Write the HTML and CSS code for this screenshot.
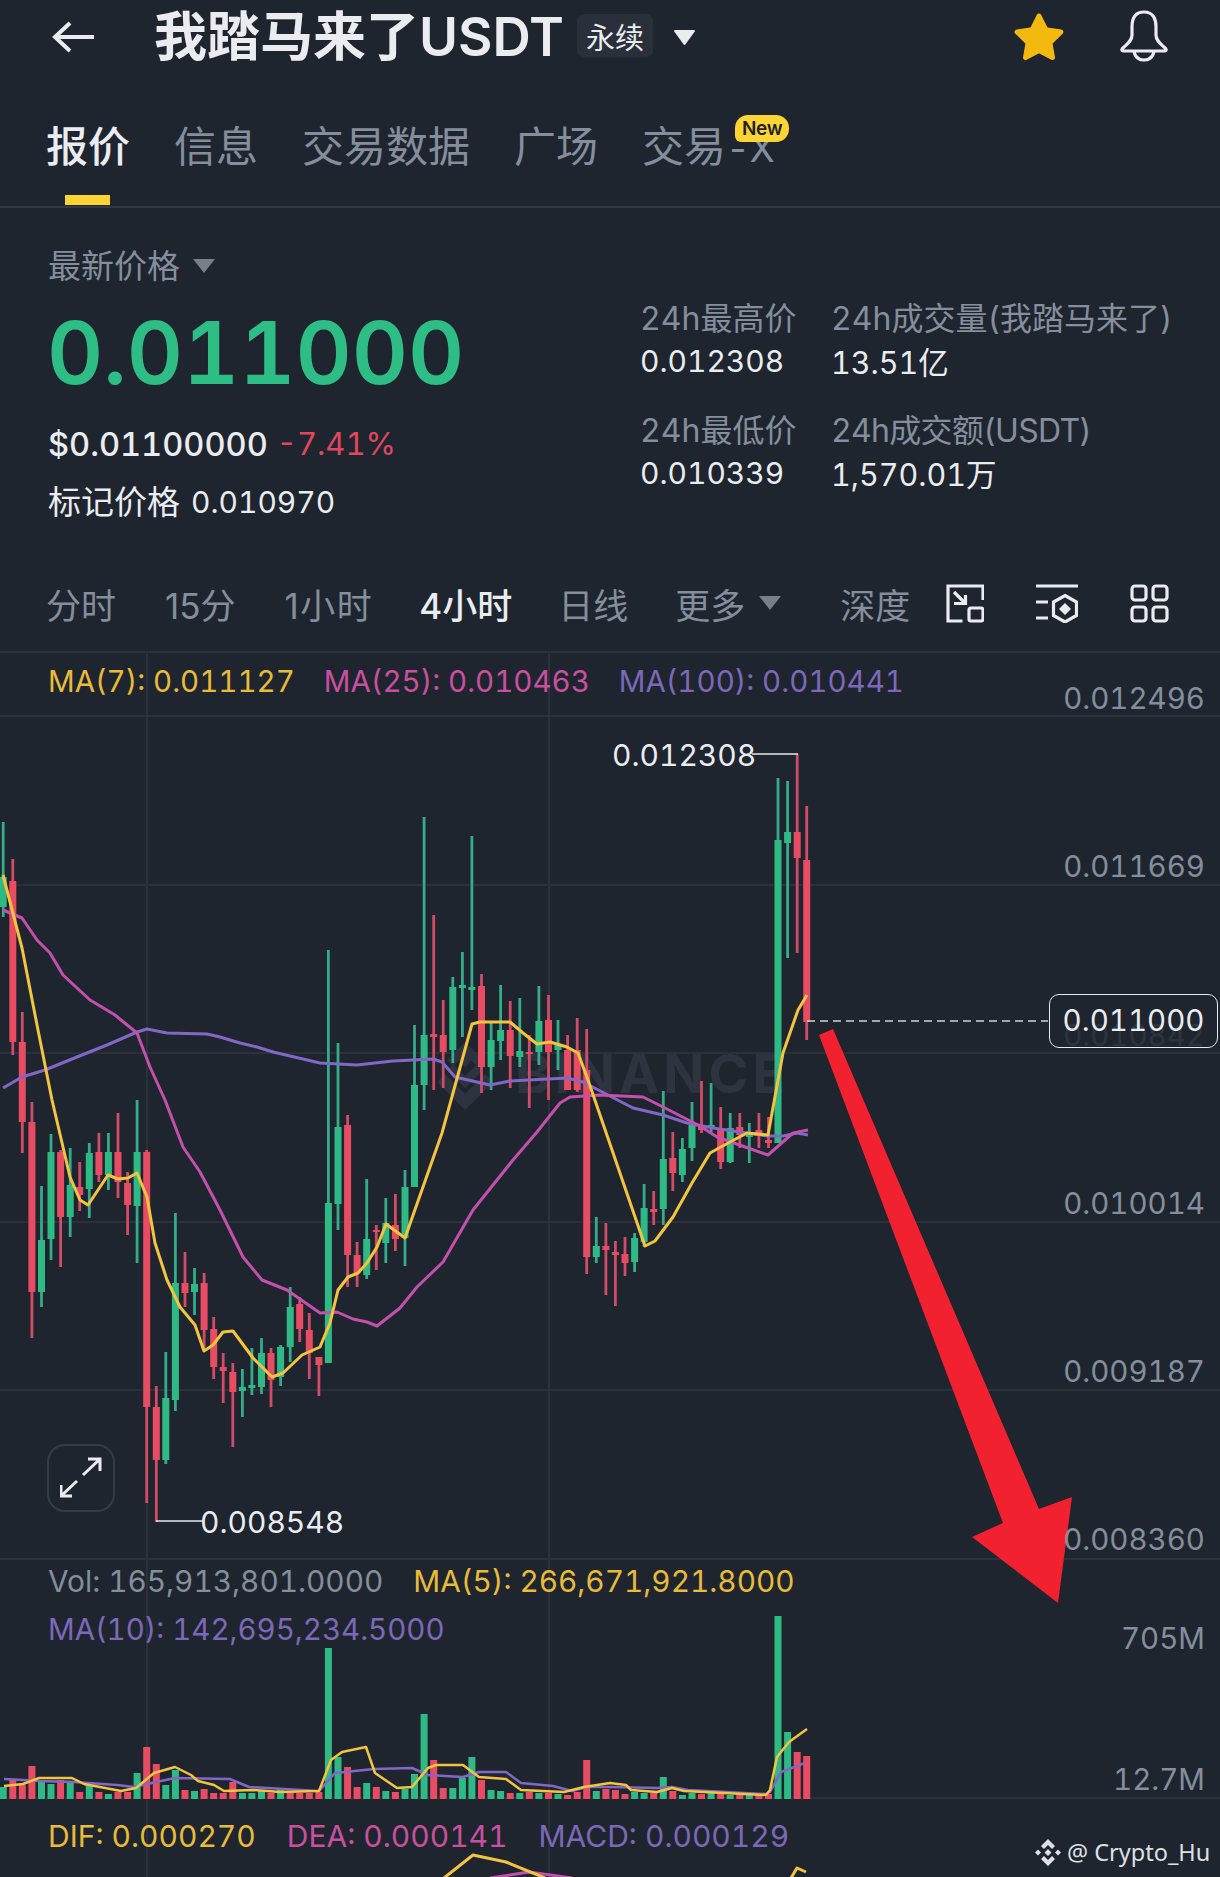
FILE: index.html
```html
<!DOCTYPE html>
<html lang="zh">
<head>
<meta charset="utf-8">
<title>我踏马来了USDT</title>
<link rel="stylesheet" href="styles.css">
</head>
<body>
<main class="app">
  <header class="topbar">
    <svg class="back" viewBox="0 0 46 34"><path d="M44 17H5M20 3 5 17l15 14"/></svg>
    <h1 class="title">我踏马来了USDT</h1>
    <span class="perp">永续</span>
    <svg class="caret-title" viewBox="0 0 25 17"><path d="M3 2h19l-9.500 13z"/></svg>
    <span class="spacer"></span>
    <svg class="star" viewBox="0 0 52 50"><path d="M26 4 32.800 17.700 47.900 19.900 36.900 30.600 39.500 45.600 26 38.500 12.500 45.600 15.100 30.600 4.100 19.900 19.200 17.700z"/></svg>
    <svg class="bell" viewBox="0 0 50 52"><path d="M25 2C15 2 13 10 13 17V25C13 31 8 34 3.500 38.500 2 40 3 41 5 41H45C47 41 48 40 46.500 38.500 42 34 37 31 37 25V17C37 10 35 2 25 2Z"/><path d="M15 41C16 48 21 50 25 50 29 50 34 48 35 41"/></svg>
  </header>

  <nav class="tabs">
    <a class="tab active">报价</a>
    <a class="tab">信息</a>
    <a class="tab">交易数据</a>
    <a class="tab">广场</a>
    <a class="tab">交易<span class="tab-x">-X</span><span class="new">New</span></a>
  </nav>

  <section class="summary">
    <div class="price-col">
      <div class="price-type">最新价格<svg class="caret-small" viewBox="0 0 22 14"><path d="M0 0h22l-11 14z"/></svg></div>
      <div class="last-price">0.011000</div>
      <div class="fiat">$0.01100000<span class="change">-7.41%</span></div>
      <div class="mark">标记价格<span class="mark-val">0.010970</span></div>
    </div>
    <dl class="stats">
      <div class="stat stat-a"><dt>24h最高价</dt><dd>0.012308</dd></div>
      <div class="stat"><dt>24h成交量(我踏马来了)</dt><dd class="dd-cn">13.51亿</dd></div>
      <div class="stat stat-a"><dt>24h最低价</dt><dd>0.010339</dd></div>
      <div class="stat"><dt class="dt-tight">24h成交额(USDT)</dt><dd class="dd-cn">1,570.01万</dd></div>
    </dl>
  </section>

  <div class="intervals">
    <span>分时</span><span>15分</span><span class="h1">1小时</span><span class="on">4小时</span><span class="day">日线</span>
    <span class="more">更多<svg class="caret-small" viewBox="0 0 22 14"><path d="M0 0h22l-11 14z"/></svg></span>
    <span class="depth">深度</span>
    <svg class="tool tool-a" viewBox="0 0 38 39"><path d="M37 16V2H2V37H16.500"/><rect x="23" y="24" width="14" height="13" rx="2"/><path d="M8 8l11 11M19.500 11v8.500H8"/></svg>
    <svg class="tool tool-b" viewBox="0 0 42 39"><path d="M0 2h42M0 18h12M0 34h12"/><path d="M29 11.500 40.500 18V31.500L29 38 17.500 31.500V18z"/><path class="solid" d="M29 19l6 6-6 6-6-6z"/></svg>
    <svg class="tool tool-c" viewBox="0 0 39 39"><rect x="2" y="2" width="14" height="14" rx="3"/><rect x="23" y="2" width="14" height="14" rx="3"/><rect x="2" y="23" width="14" height="14" rx="3"/><rect x="23" y="23" width="14" height="14" rx="3"/></svg>
  </div>

  <section class="chart">
    <svg class="plot" viewBox="0 653 1220 1224">
      <path class="grid" d="M0 716H1220M0 885H1220M0 1053H1220M0 1222H1220M0 1390H1220M0 1559H1220M0 1798H1220M147 653V1877M549 653V1877"/>
      <g class="wm">
        <path d="M465 1067l10-10-10-10-10 10zM465 1088l18-18-6-6-12 12-12-12-6 6zM465 1110l-28-28 8-8 20 20 20-20 8 8zM465 1042l-18 18-0 0 6 6 12-12 12 12 6-6z"/>
        <text x="515" y="1093">BINANCE</text>
      </g>
      <path class="gw" d="M3.200 822V917M41.500 1186V1307M51 1134V1260M70.200 1148V1237M89.300 1143V1218M108.400 1133V1190M137.100 1100V1263M165.800 1352V1464M175.400 1213V1411M194.500 1268V1315M242.400 1369V1417M251.900 1348V1395M261.500 1338V1394M280.600 1345V1386M290.200 1287V1362M328.400 950V1363M338 1043V1230M366.700 1179V1279M385.800 1198V1263M405 1170V1266M414.500 1025V1187M424.100 817V1110M452.800 977V1063M462.400 952V1037M471.900 836V1010M491.100 1023V1090M500.600 985V1060M519.800 998V1067M538.900 986V1065M558 1020V1070M596.300 1217V1263M634.600 1233V1272M644.100 1184V1247M663.300 1091V1225M682.400 1138V1182M692 1102V1161M711.100 1083V1132M730.200 1113V1163M749.300 1123V1163M778 778V1143M787.600 781V958"/>
      <path class="gb" d="M3.200 877V907M41.500 1240V1292M51 1152V1239M70.200 1185V1217M89.300 1153V1189M108.400 1152V1175M137.100 1152V1206M165.800 1398V1460M175.400 1283V1400M194.500 1284V1292M242.400 1387V1391M251.900 1385V1388M261.500 1353V1387M280.600 1347V1377M290.200 1307V1347M328.400 1203V1363M338 1127V1204M366.700 1239V1275M385.800 1223V1243M405 1187V1238M414.500 1085V1187M424.100 1035V1085M452.800 987V1050M462.400 985V988M471.900 987V990M491.100 1040V1067M500.600 1030V1041M519.800 1051V1057M538.900 1021V1052M558 1045V1050M596.300 1246V1257M634.600 1238V1262M644.100 1208V1242M663.300 1159V1209M682.400 1149V1175M692 1125V1148M711.100 1125V1128M730.200 1128V1162M749.300 1135V1137M778 840V1143M787.600 832V843"/>
      <path class="rw" d="M12.800 859V1055M22.300 1012V1153M31.900 1102V1338M60.600 1150V1267M79.700 1162V1211M98.900 1133V1182M118 1113V1198M127.600 1172V1235M146.700 1150V1503M156.300 1386V1522M185 1252V1307M204.100 1273V1348M213.700 1317V1379M223.200 1353V1403M232.800 1363V1447M271 1348V1407M299.700 1297V1342M309.300 1313V1379M318.900 1357V1396M347.600 1115V1287M357.100 1242V1287M376.300 1225V1270M395.400 1194V1251M433.700 915V1090M443.200 1000V1088M481.500 974V1093M510.200 1001V1088M529.300 1035V1108M548.500 995V1100M567.600 1035V1090M577.200 1018V1092M586.700 1029V1274M605.900 1223V1295M615.400 1241V1306M625 1237V1276M653.700 1191V1225M672.800 1132V1191M701.500 1081V1133M720.700 1107V1169M739.800 1113V1148M758.900 1113V1148M768.500 1117V1148M797.200 754V953M806.700 806V1040"/>
      <path class="rb" d="M12.800 881V1042M22.300 1042V1122M31.900 1122V1292M60.600 1152V1217M79.700 1187V1195M98.900 1152V1175M118 1152V1182M127.600 1183V1205M146.700 1152V1407M156.300 1407V1460M185 1283V1293M204.100 1283V1330M213.700 1329V1367M223.200 1367V1371M232.800 1372V1392M271 1353V1380M299.700 1304V1329M309.300 1330V1353M318.900 1357V1365M347.600 1125V1255M357.100 1255V1273M376.300 1230V1232M395.400 1225V1239M433.700 1034V1037M443.200 1035V1052M481.500 986V1067M510.200 1030V1056M529.300 1052V1054M548.500 1020V1052M567.600 1050V1090M577.200 1050V1090M586.700 1070V1257M605.900 1246V1250M615.400 1252V1255M625 1254V1263M653.700 1209V1212M672.800 1158V1173M701.500 1125V1130M720.700 1128V1162M739.800 1127V1135M758.900 1130V1135M768.500 1140V1143M797.200 832V858M806.700 860V1022"/>
      <polyline class="ln pu" points="3,1088 22,1077 45,1070 77,1057 107,1045 137,1032 147,1029 167,1033 207,1034 220,1037 240,1043 257,1047 273,1052 320,1063 357,1065 393,1061 433,1059 442,1062 455,1077 490,1085 510,1081 567,1078 583,1082 633,1108 663,1115 687,1123 713,1128 767,1136 783,1136 797,1133 808,1135"/>
      <polyline class="ln pk" points="3,910 22,918 37,940 50,953 63,975 90,1000 115,1015 137,1033 150,1067 165,1100 183,1147 200,1172 220,1210 243,1257 262,1280 287,1290 320,1313 337,1312 353,1319 367,1322 377,1326 400,1308 417,1287 443,1262 473,1210 513,1160 537,1132 560,1103 570,1097 600,1095 643,1097 663,1107 700,1126 717,1137 768,1155 793,1133 808,1130"/>
      <polyline class="ln ye" points="3,875 22,948 38,1030 52,1100 70,1177 80,1200 88,1205 108,1175 118,1179 128,1178 137,1173 147,1197 155,1243 167,1280 180,1307 195,1325 204,1351 213,1345 223,1332 233,1331 253,1358 272,1377 283,1373 302,1355 320,1347 330,1323 338,1290 348,1277 358,1273 367,1263 377,1247 386,1224 405,1238 442,1133 472,1024 480,1022 510,1022 523,1033 537,1044 550,1042 567,1047 578,1053 588,1080 645,1246 655,1241 673,1217 692,1183 710,1153 730,1142 747,1133 768,1135 783,1053 798,1010 807,995"/>
      <path class="gb" d="M3.200 1799V1787M41.500 1799V1781M51 1799V1784M70.200 1799V1782M89.300 1799V1785M108.400 1799V1794M137.100 1799V1773M165.800 1799V1785M175.400 1799V1770M194.500 1799V1791M242.400 1799V1793M251.900 1799V1793M261.500 1799V1791M280.600 1799V1789M328.400 1799V1648M338 1799V1757M366.700 1799V1783M385.800 1799V1791M405 1799V1789M414.500 1799V1774M424.100 1799V1714M452.800 1799V1788M462.400 1799V1778M471.900 1799V1757M491.100 1799V1790M500.600 1799V1791M519.800 1799V1793M538.900 1799V1793M558 1799V1794M596.300 1799V1791M634.600 1799V1792M644.100 1799V1793M663.300 1799V1777M682.400 1799V1795M692 1799V1793M711.100 1799V1793M730.200 1799V1795M749.300 1799V1795M778 1799V1616M787.600 1799V1732"/>
      <path class="rb" d="M12.800 1799V1780M22.300 1799V1785M31.900 1799V1766M60.600 1799V1780M79.700 1799V1792M98.900 1799V1792M118 1799V1792M127.600 1799V1792M146.700 1799V1747M156.300 1799V1764M185 1799V1790M204.100 1799V1789M213.700 1799V1793M223.200 1799V1793M232.800 1799V1782M271 1799V1793M290.200 1799V1793M299.700 1799V1793M309.300 1799V1793M318.900 1799V1792M347.600 1799V1767M357.100 1799V1787M376.300 1799V1787M395.400 1799V1792M433.700 1799V1760M443.200 1799V1788M481.500 1799V1780M510.200 1799V1793M529.300 1799V1792M548.500 1799V1793M567.600 1799V1795M577.200 1799V1792M586.700 1799V1760M605.900 1799V1789M615.400 1799V1790M625 1799V1794M653.700 1799V1793M672.800 1799V1791M701.500 1799V1794M720.700 1799V1794M739.800 1799V1794M758.900 1799V1794M768.500 1799V1794M797.200 1799V1752M806.700 1799V1756"/>
      <polyline class="ln thin pu" points="4,1779 23,1780 39,1781 74,1782 117,1785 134,1787 156,1782 175,1778 230,1779 249,1787 319,1791 335,1773 374,1769 412,1768 428,1775 463,1777 479,1772 506,1772 521,1783 553,1786 572,1791 587,1787 610,1787 657,1788 672,1787 688,1790 766,1794 770,1792 781,1772 805,1763"/>
      <polyline class="ln thin ye" points="4,1786 23,1784 39,1778 72,1778 84,1784 121,1791 136,1788 154,1773 175,1767 191,1775 198,1781 214,1785 224,1791 253,1790 280,1792 319,1791 331,1760 342,1752 366,1747 375,1773 397,1788 412,1787 428,1768 436,1765 463,1765 479,1777 506,1779 521,1790 564,1792 584,1787 610,1783 626,1785 631,1790 657,1792 672,1788 684,1791 766,1795 770,1790 777,1757 789,1742 807,1729"/>
      <polyline class="ln pk" points="490,1878 529,1872 572,1878"/>
      <polyline class="ln ye" points="444,1878 473,1855 506,1862 545,1878"/>
      <polyline class="ln ye" points="791,1878 797,1868 806,1872"/>
      <path class="callout" d="M752 754H798M156 1521H203"/>
      <path class="dash" d="M807 1021H1048"/>
      <polygon class="arrow" points="819,1035 833,1029 1039,1509 1072,1497 1058,1603 972,1537 1003,1523"/>
    </svg>

    <div class="legend legend-ma"><span class="c-ye">MA(7): 0.011127</span><span class="c-pk">MA(25): 0.010463</span><span class="c-pu">MA(100): 0.010441</span></div>

    <div class="price-axis">
      <span>0.012496</span><span>0.011669</span><span>0.010842</span><span>0.010014</span><span>0.009187</span><span>0.008360</span>
    </div>
    <div class="pill">0.011000</div>
    <div class="tag tag-high">0.012308</div>
    <div class="tag tag-low">0.008548</div>

    <button class="expand" type="button" aria-label="expand"><svg viewBox="0 0 42 42"><path d="M23 18 40 2M28 2h12v12M17 24 1 39M12 39H1V28"/></svg></button>

    <div class="legend legend-vol"><span class="c-gr">Vol: 165,913,801.0000</span><span class="c-ye">MA(5): 266,671,921.8000</span></div>
    <div class="legend legend-vol2"><span class="c-pu">MA(10): 142,695,234.5000</span></div>
    <div class="axis-v axis-v1">705M</div>
    <div class="axis-v axis-v2">12.7M</div>
    <div class="legend legend-macd"><span class="c-ye">DIF: 0.000270</span><span class="c-pk">DEA: 0.000141</span><span class="c-pu">MACD: 0.000129</span></div>

    <div class="credit">
      <svg viewBox="0 0 26 27"><path d="M13 0l7 7-3 3-4-4-4 4-3-3zM13 27l7-7-3-3-4 4-4-4-3 3zM0 13.500l3-3 3 3-3 3zM20 13.500l3-3 3 3-3 3zM13 10l3.500 3.500L13 17l-3.500-3.500z"/></svg>
      <span>@ Crypto_Hu</span>
    </div>
  </section>
</main>
</body>
</html>
```
FILE: styles.css
```css
* { box-sizing: border-box; margin: 0; padding: 0; }
html, body { background: #1e252f; }
body {
  width: 1220px;
  height: 1877px;
  overflow: hidden;
  font-family: Inter, "Noto Sans CJK SC", sans-serif;
  color: #eaecef;
  font-feature-settings: "tnum" 1;
}
.app { display: flex; flex-direction: column; height: 1877px; }

/* top bar */
.topbar { display: flex; align-items: center; height: 74px; padding: 0 51px 0 50px; flex: none; }
.back { width: 46px; height: 34px; margin-right: 58px; }
.back path { fill: none; stroke: #eaecef; stroke-width: 4; }
.title { margin-bottom: 9px; font-size: 53px; font-weight: 600; color: #eaecef; letter-spacing: 0; white-space: nowrap; }
.perp { display: flex; align-items: center; justify-content: center; width: 76px; height: 43px; margin-left: 13px; margin-bottom: 3px; border-radius: 7px; background: #29303a; font-size: 29px; }
.caret-title { width: 25px; height: 17px; margin-left: 19px; }
.caret-title path { fill: #eaecef; stroke: #eaecef; stroke-width: 2; stroke-linejoin: round; }
.spacer { flex: 1; }
.star { width: 52px; height: 50px; margin-right: 54px; }
.star path { fill: #f3b90f; stroke: #f3b90f; stroke-width: 5; stroke-linejoin: round; }
.bell { width: 50px; height: 52px; margin-bottom: 2px; }
.bell path { fill: none; stroke: #eaecef; stroke-width: 3.200; }

/* tabs */
.tabs { display: flex; gap: 44px; height: 134px; padding: 53px 0 0 46px; border-bottom: 2px solid #333a45; flex: none; }
.tab { position: relative; font-size: 42px; line-height: 40px; color: #848e9c; height: 40px; }
.tab.active { color: #eaecef; font-weight: 500; }
.tab.active::after { content: ""; position: absolute; left: 19px; top: 68px; width: 45px; height: 10px; background: #fcd535; }
.tab-x { font-size: 37px; letter-spacing: -.5px; }
.new { position: absolute; right: -15px; top: -12px; padding: 0 7px; height: 27px; line-height: 27px; border-radius: 13px 13px 13px 6px; background: #fcd535; color: #1e2329; font-size: 19px; font-weight: 600; letter-spacing: -.3px; }

/* summary */
.summary { display: flex; height: 353px; padding: 0 0 0 48px; flex: none; }
.price-col { width: 592px; padding-top: 42px; }
.price-type { display: flex; align-items: center; gap: 13px; font-size: 33px; line-height: 32px; color: #848e9c; }
.caret-small { width: 22px; height: 14px; flex: none; }
.caret-small path { fill: #777f8b; }
.last-price { margin-top: 31px; margin-left: -1px; font-size: 87px; line-height: 80px; font-weight: 600; color: #2ebd85; letter-spacing: 0; }
.fiat { margin-top: 31px; font-size: 32.600px; line-height: 40px; font-weight: 500; display: flex; align-items: center; }
.change { margin-left: 9px; color: #e0475f; font-size: 31px; font-weight: 400; }
.mark { margin-top: 18px; font-size: 33px; line-height: 40px; font-weight: 400; display: flex; align-items: center; }
.mark-val { margin-left: 11px; font-size: 30px; }
.stats { display: grid; grid-template-columns: 191px 1fr; grid-auto-rows: 112px; padding-top: 93px; }
.stat dt { font-size: 32px; line-height: 36px; color: #848e9c; white-space: nowrap; }
.stat .dt-tight { letter-spacing: -.7px; }
.stat dd { margin-top: 6px; font-size: 30px; line-height: 36px; color: #eaecef; }
.stat .dd-cn { margin-top: 8px; font-size: 30.500px; }

/* intervals */
.intervals { display: flex; align-items: center; height: 92px; padding: 0 0 6px 46px; gap: 49px; border-bottom: 2px solid #2a313b; font-size: 35px; color: #848e9c; flex: none; font-feature-settings: normal; }
.intervals .on { color: #eaecef; font-weight: 500; margin-left: -3px; }
.intervals .h1 { letter-spacing: 1.500px; }
.intervals .day { margin-left: -3px; }
.more { display: flex; align-items: center; gap: 14px; margin-left: -2px; }
.depth { margin-left: 10px; }
.tool { flex: none; height: 39px; margin-left: -13px; }
.tool rect, .tool path { fill: none; stroke: #eaecef; stroke-width: 3.200; }
.tool .solid { fill: #eaecef; stroke: none; }
.tool-a { width: 38px; }
.tool-b { width: 42px; margin-left: 3px; }
.tool-c { width: 39px; margin-left: 3px; }

/* chart */
.chart { position: relative; flex: 1; overflow: hidden; }
.plot { position: absolute; left: 0; top: 0; width: 1220px; height: 1224px; }
.grid { stroke: #30363f; stroke-width: 1.500; fill: none; }
.wm path { fill: #2d3440; }
.wm text { fill: #2d3440; font: 700 54px Inter, sans-serif; letter-spacing: 4px; }
.gw { stroke: #34ab89; stroke-width: 2.800; fill: none; }
.gb { stroke: #2fb985; stroke-width: 7; fill: none; }
.rw { stroke: #d14c66; stroke-width: 2.800; fill: none; }
.rb { stroke: #e84c63; stroke-width: 7; fill: none; }
.ln { fill: none; stroke-width: 3; stroke-linejoin: round; }
.ln.thin { stroke-width: 2.500; }
.ye { stroke: #f3c43f; }
.pk { stroke: #c450ae; }
.pu { stroke: #8268c4; }
.callout { stroke: #e6e9ee; stroke-width: 1.500; fill: none; }
.dash { stroke: #cfd3d8; stroke-width: 1.500; stroke-dasharray: 8 5; fill: none; }
.arrow { fill: #f2212f; }

.legend { position: absolute; left: 48px; display: flex; font-size: 29.500px; line-height: 36px; white-space: nowrap; }
.legend-ma { top: 10px; gap: 29px; }
.legend-vol { top: 910px; gap: 30px; font-size: 29.800px; }
.legend-vol2 { top: 958px; }
.legend-macd { top: 1165px; gap: 31px; font-size: 30px; }
.c-ye { color: #e8bb3a; }
.c-pk { color: #c9509f; }
.c-pu { color: #7d68b8; }
.c-gr { color: #848e9c; }

.price-axis { position: absolute; right: 15px; top: 27px; display: grid; grid-auto-rows: 168.300px; justify-items: end; font-size: 29.500px; line-height: 36px; color: #848e9c; }
.pill { position: absolute; left: 1049px; top: 341px; width: 169px; height: 54px; border: 1.500px solid #e6e9ee; border-radius: 10px; background: rgba(30, 37, 47, .86); font-size: 29.500px; line-height: 51px; text-align: center; }
.tag { position: absolute; font-size: 30px; line-height: 36px; color: #eaecef; }
.tag-high { left: 612px; top: 84px; }
.tag-low { left: 200px; top: 851px; }
.expand { position: absolute; left: 47px; top: 791px; display: flex; align-items: center; justify-content: center; width: 68px; height: 68px; border: 2px solid #353c47; border-radius: 18px; background: none; }
.expand svg { width: 42px; height: 42px; flex: none; }
.expand path { fill: none; stroke: #eaecef; stroke-width: 3; }
.axis-v { position: absolute; right: 15px; font-size: 29.500px; line-height: 36px; color: #848e9c; }
.axis-v1 { top: 967px; }
.axis-v2 { top: 1108px; }
.credit { position: absolute; left: 1035px; top: 1184px; display: flex; align-items: center; gap: 6px; font-family: "Noto Sans", sans-serif; font-size: 23.500px; line-height: 30px; color: #dde0e4; white-space: nowrap; }
.credit svg { width: 26px; height: 27px; }
.credit path { fill: #dde0e4; }
```
